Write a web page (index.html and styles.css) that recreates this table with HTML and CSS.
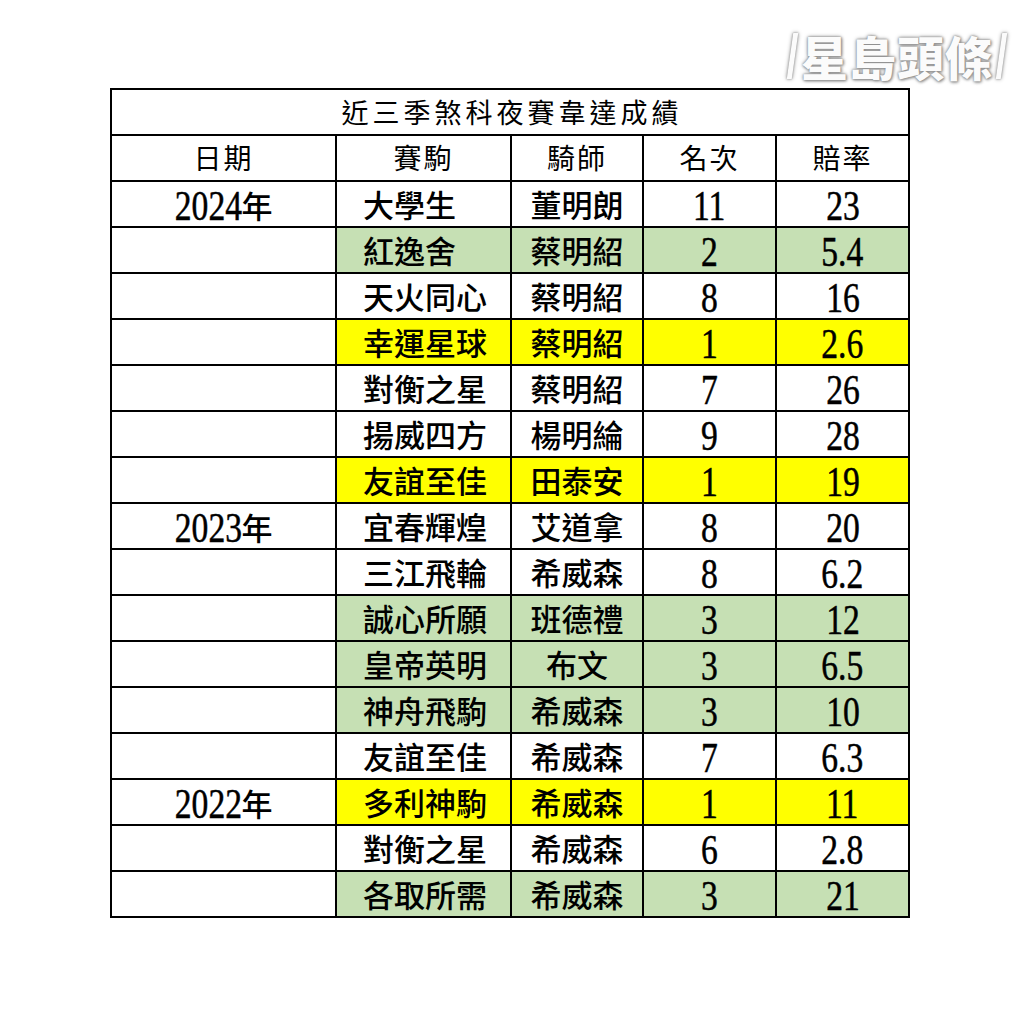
FILE: index.html
```html
<!DOCTYPE html>
<html lang="zh-Hant">
<head>
<meta charset="utf-8">
<title>近三季煞科夜賽韋達成績</title>
<link rel="stylesheet" href="styles.css">
</head>
<body>
<div class="page">
  <div class="top">
    <div class="logo"><span class="bar"></span><span class="logo-text">星島頭條</span><span class="bar"></span></div>
  </div>
  <table class="results">
    <colgroup>
      <col class="c1"><col class="c2"><col class="c3"><col class="c4"><col class="c5">
    </colgroup>
    <tr class="title-row"><td colspan="5">近三季煞科夜賽韋達成績</td></tr>
    <tr class="head-row"><td>日期</td><td>賽駒</td><td>騎師</td><td>名次</td><td>賠率</td></tr>
    <tr><td class="year"><span class="yd">2024</span>年</td><td class="horse">大學生</td><td class="jk">董明朗</td><td><span class="n">11</span></td><td><span class="n">23</span></td></tr>
    <tr class="g"><td></td><td class="horse">紅逸舍</td><td class="jk">蔡明紹</td><td><span class="n">2</span></td><td><span class="n">5.4</span></td></tr>
    <tr><td></td><td class="horse">天火同心</td><td class="jk">蔡明紹</td><td><span class="n">8</span></td><td><span class="n">16</span></td></tr>
    <tr class="y"><td></td><td class="horse">幸運星球</td><td class="jk">蔡明紹</td><td><span class="n">1</span></td><td><span class="n">2.6</span></td></tr>
    <tr><td></td><td class="horse">對衡之星</td><td class="jk">蔡明紹</td><td><span class="n">7</span></td><td><span class="n">26</span></td></tr>
    <tr><td></td><td class="horse">揚威四方</td><td class="jk">楊明綸</td><td><span class="n">9</span></td><td><span class="n">28</span></td></tr>
    <tr class="y"><td></td><td class="horse">友誼至佳</td><td class="jk">田泰安</td><td><span class="n">1</span></td><td><span class="n">19</span></td></tr>
    <tr><td class="year"><span class="yd">2023</span>年</td><td class="horse">宜春輝煌</td><td class="jk">艾道拿</td><td><span class="n">8</span></td><td><span class="n">20</span></td></tr>
    <tr><td></td><td class="horse">三江飛輪</td><td class="jk">希威森</td><td><span class="n">8</span></td><td><span class="n">6.2</span></td></tr>
    <tr class="g"><td></td><td class="horse">誠心所願</td><td class="jk">班德禮</td><td><span class="n">3</span></td><td><span class="n">12</span></td></tr>
    <tr class="g"><td></td><td class="horse">皇帝英明</td><td class="jk">布文</td><td><span class="n">3</span></td><td><span class="n">6.5</span></td></tr>
    <tr class="g"><td></td><td class="horse">神舟飛駒</td><td class="jk">希威森</td><td><span class="n">3</span></td><td><span class="n">10</span></td></tr>
    <tr><td></td><td class="horse">友誼至佳</td><td class="jk">希威森</td><td><span class="n">7</span></td><td><span class="n">6.3</span></td></tr>
    <tr class="y"><td class="year"><span class="yd">2022</span>年</td><td class="horse">多利神駒</td><td class="jk">希威森</td><td><span class="n">1</span></td><td><span class="n">11</span></td></tr>
    <tr><td></td><td class="horse">對衡之星</td><td class="jk">希威森</td><td><span class="n">6</span></td><td><span class="n">2.8</span></td></tr>
    <tr class="g"><td></td><td class="horse">各取所需</td><td class="jk">希威森</td><td><span class="n">3</span></td><td><span class="n">21</span></td></tr>
  </table>
</div>
</body>
</html>
```
FILE: styles.css
```css
html, body {
  margin: 0;
  padding: 0;
  background: #ffffff;
}
body {
  font-family: "Noto Sans CJK TC", "Noto Sans", sans-serif;
  color: #000;
}
.page {
  width: 1024px;
  height: 1011px;
  overflow: hidden;
}
.top {
  height: 88px;
  display: flex;
  justify-content: flex-end;
  align-items: flex-start;
  padding-right: 20px;
  box-sizing: border-box;
  padding-top: 29px;
}
.logo {
  display: flex;
  align-items: center;
  gap: 6px;
}
.logo-text {
  font-family: "Noto Sans CJK TC", sans-serif;
  font-weight: 900;
  font-size: 47px;
  line-height: 54px;
  letter-spacing: 1px;
  color: #fbfbfb;
  text-shadow: 0 0 2px #8a8a8a, 0 0 4px #9a9a9a, 1px 1px 3px #888;
}
.bar {
  display: block;
  width: 5px;
  height: 46px;
  background: #fbfbfb;
  box-shadow: 0 0 2px #8a8a8a, 0 0 4px #9a9a9a;
  transform: skewX(-8deg);
}
.results {
  margin-left: 110px;
  border-collapse: collapse;
  table-layout: fixed;
  width: 798px;
  border: 2px solid #000;
}
.c1 { width: 225px; }
.c2 { width: 175px; }
.c3 { width: 132px; }
.c4 { width: 133px; }
.c5 { width: 133px; }
.results td {
  border: 2px solid #000;
  height: 44px;
  padding: 0;
  text-align: center;
  vertical-align: middle;
  font-size: 31px;
  font-weight: 500;
  line-height: 1.2;
  white-space: nowrap;
}
.title-row td {
  font-size: 27px;
  font-weight: 400;
  letter-spacing: 4px;
  padding-left: 4px;
}
.head-row td {
  font-size: 28px;
  font-weight: 400;
  letter-spacing: 2px;
}
.results td.horse {
  text-align: left;
  padding-left: 26px;
}
.n, .yd {
  display: inline-block;
  font-family: "Liberation Serif", "Times New Roman", serif;
  font-size: 42px;
  font-weight: 400;
  line-height: 1;
  -webkit-text-stroke: 0.5px #000;
  transform: scaleX(0.8);
  position: relative;
  top: 2px;
}
.yd {
  transform-origin: right center;
  margin-left: -17px;
}
.g td + td { background: #c6e0b4; }
.y td + td { background: #ffff00; }
```
